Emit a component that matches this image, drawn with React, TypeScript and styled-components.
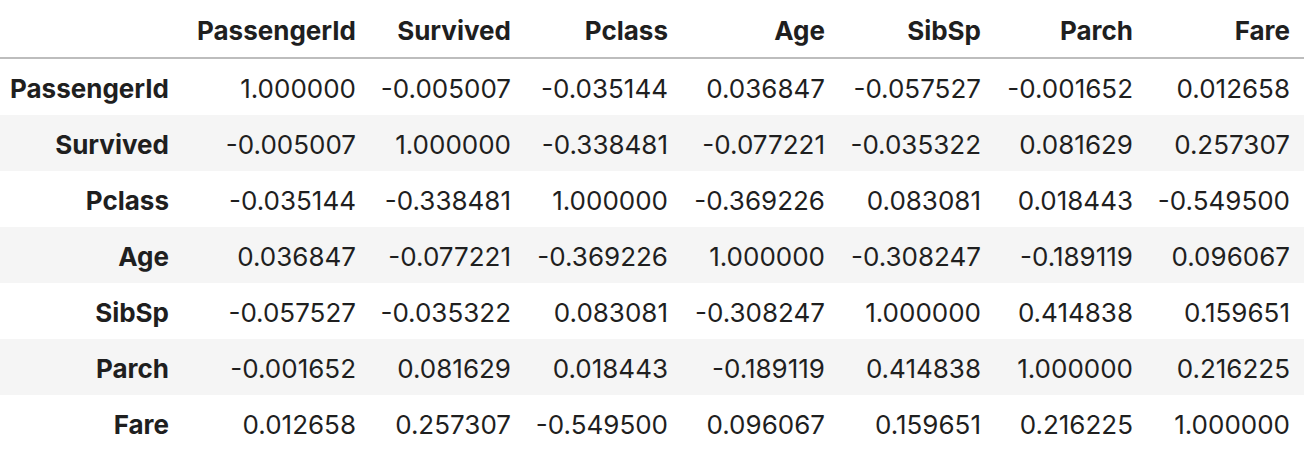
import React, {FunctionComponent} from 'react';
import styled, {createGlobalStyle} from 'styled-components';

const GlobalStl = createGlobalStyle`
    html, body {
        margin: 0;
        padding: 0;
        background: #ffffff;
    }
    body {
        font-family: Inter, "Noto Sans", "Liberation Sans", sans-serif;
        color: #1f1f1f;
    }
`;

const TableStl = styled.table`
    border-collapse: separate;
    border-spacing: 0;
    table-layout: fixed;
    width: 1304px;
    font-size: 26px;
`;

const HeadCellStl = styled.th`
    height: 59px;
    padding: 3px 14px 0 0;
    box-sizing: border-box;
    text-align: right;
    font-weight: 700;
    white-space: nowrap;
    border-bottom: 2px solid #bdbdbd;
`;

const RowStl = styled.tr<{ $striped: boolean }>`
    background-color: ${p => (p.$striped ? '#f5f5f5' : '#ffffff')};
`;

const RowLabelStl = styled.th`
    height: 56px;
    box-sizing: border-box;
    padding: 2px 14px 0 0;
    text-align: right;
    font-weight: 700;
    white-space: nowrap;
`;

const CellStl = styled.td`
    height: 56px;
    box-sizing: border-box;
    padding: 2px 14px 0 0;
    text-align: right;
    font-weight: 400;
    white-space: nowrap;
`;

const COLUMNS = ['PassengerId', 'Survived', 'Pclass', 'Age', 'SibSp', 'Parch', 'Fare'];
const WIDTHS = [183, 187, 155, 157, 157, 156, 152, 157];

const DATA: string[][] = [
    ['1.000000', '-0.005007', '-0.035144', '0.036847', '-0.057527', '-0.001652', '0.012658'],
    ['-0.005007', '1.000000', '-0.338481', '-0.077221', '-0.035322', '0.081629', '0.257307'],
    ['-0.035144', '-0.338481', '1.000000', '-0.369226', '0.083081', '0.018443', '-0.549500'],
    ['0.036847', '-0.077221', '-0.369226', '1.000000', '-0.308247', '-0.189119', '0.096067'],
    ['-0.057527', '-0.035322', '0.083081', '-0.308247', '1.000000', '0.414838', '0.159651'],
    ['-0.001652', '0.081629', '0.018443', '-0.189119', '0.414838', '1.000000', '0.216225'],
    ['0.012658', '0.257307', '-0.549500', '0.096067', '0.159651', '0.216225', '1.000000'],
];

const App: FunctionComponent<{}> = () => {
    return (
        <>
            <GlobalStl/>
            <TableStl>
                <colgroup>
                    {WIDTHS.map((w, i) => <col key={i} style={{width: w}}/>)}
                </colgroup>
                <thead>
                    <tr>
                        <HeadCellStl/>
                        {COLUMNS.map(c => <HeadCellStl key={c}>{c}</HeadCellStl>)}
                    </tr>
                </thead>
                <tbody>
                    {DATA.map((row, i) => (
                        <RowStl key={COLUMNS[i]} $striped={i % 2 === 1}>
                            <RowLabelStl>{COLUMNS[i]}</RowLabelStl>
                            {row.map((v, j) => <CellStl key={j}>{v}</CellStl>)}
                        </RowStl>
                    ))}
                </tbody>
            </TableStl>
        </>
    )
};

export default App;
